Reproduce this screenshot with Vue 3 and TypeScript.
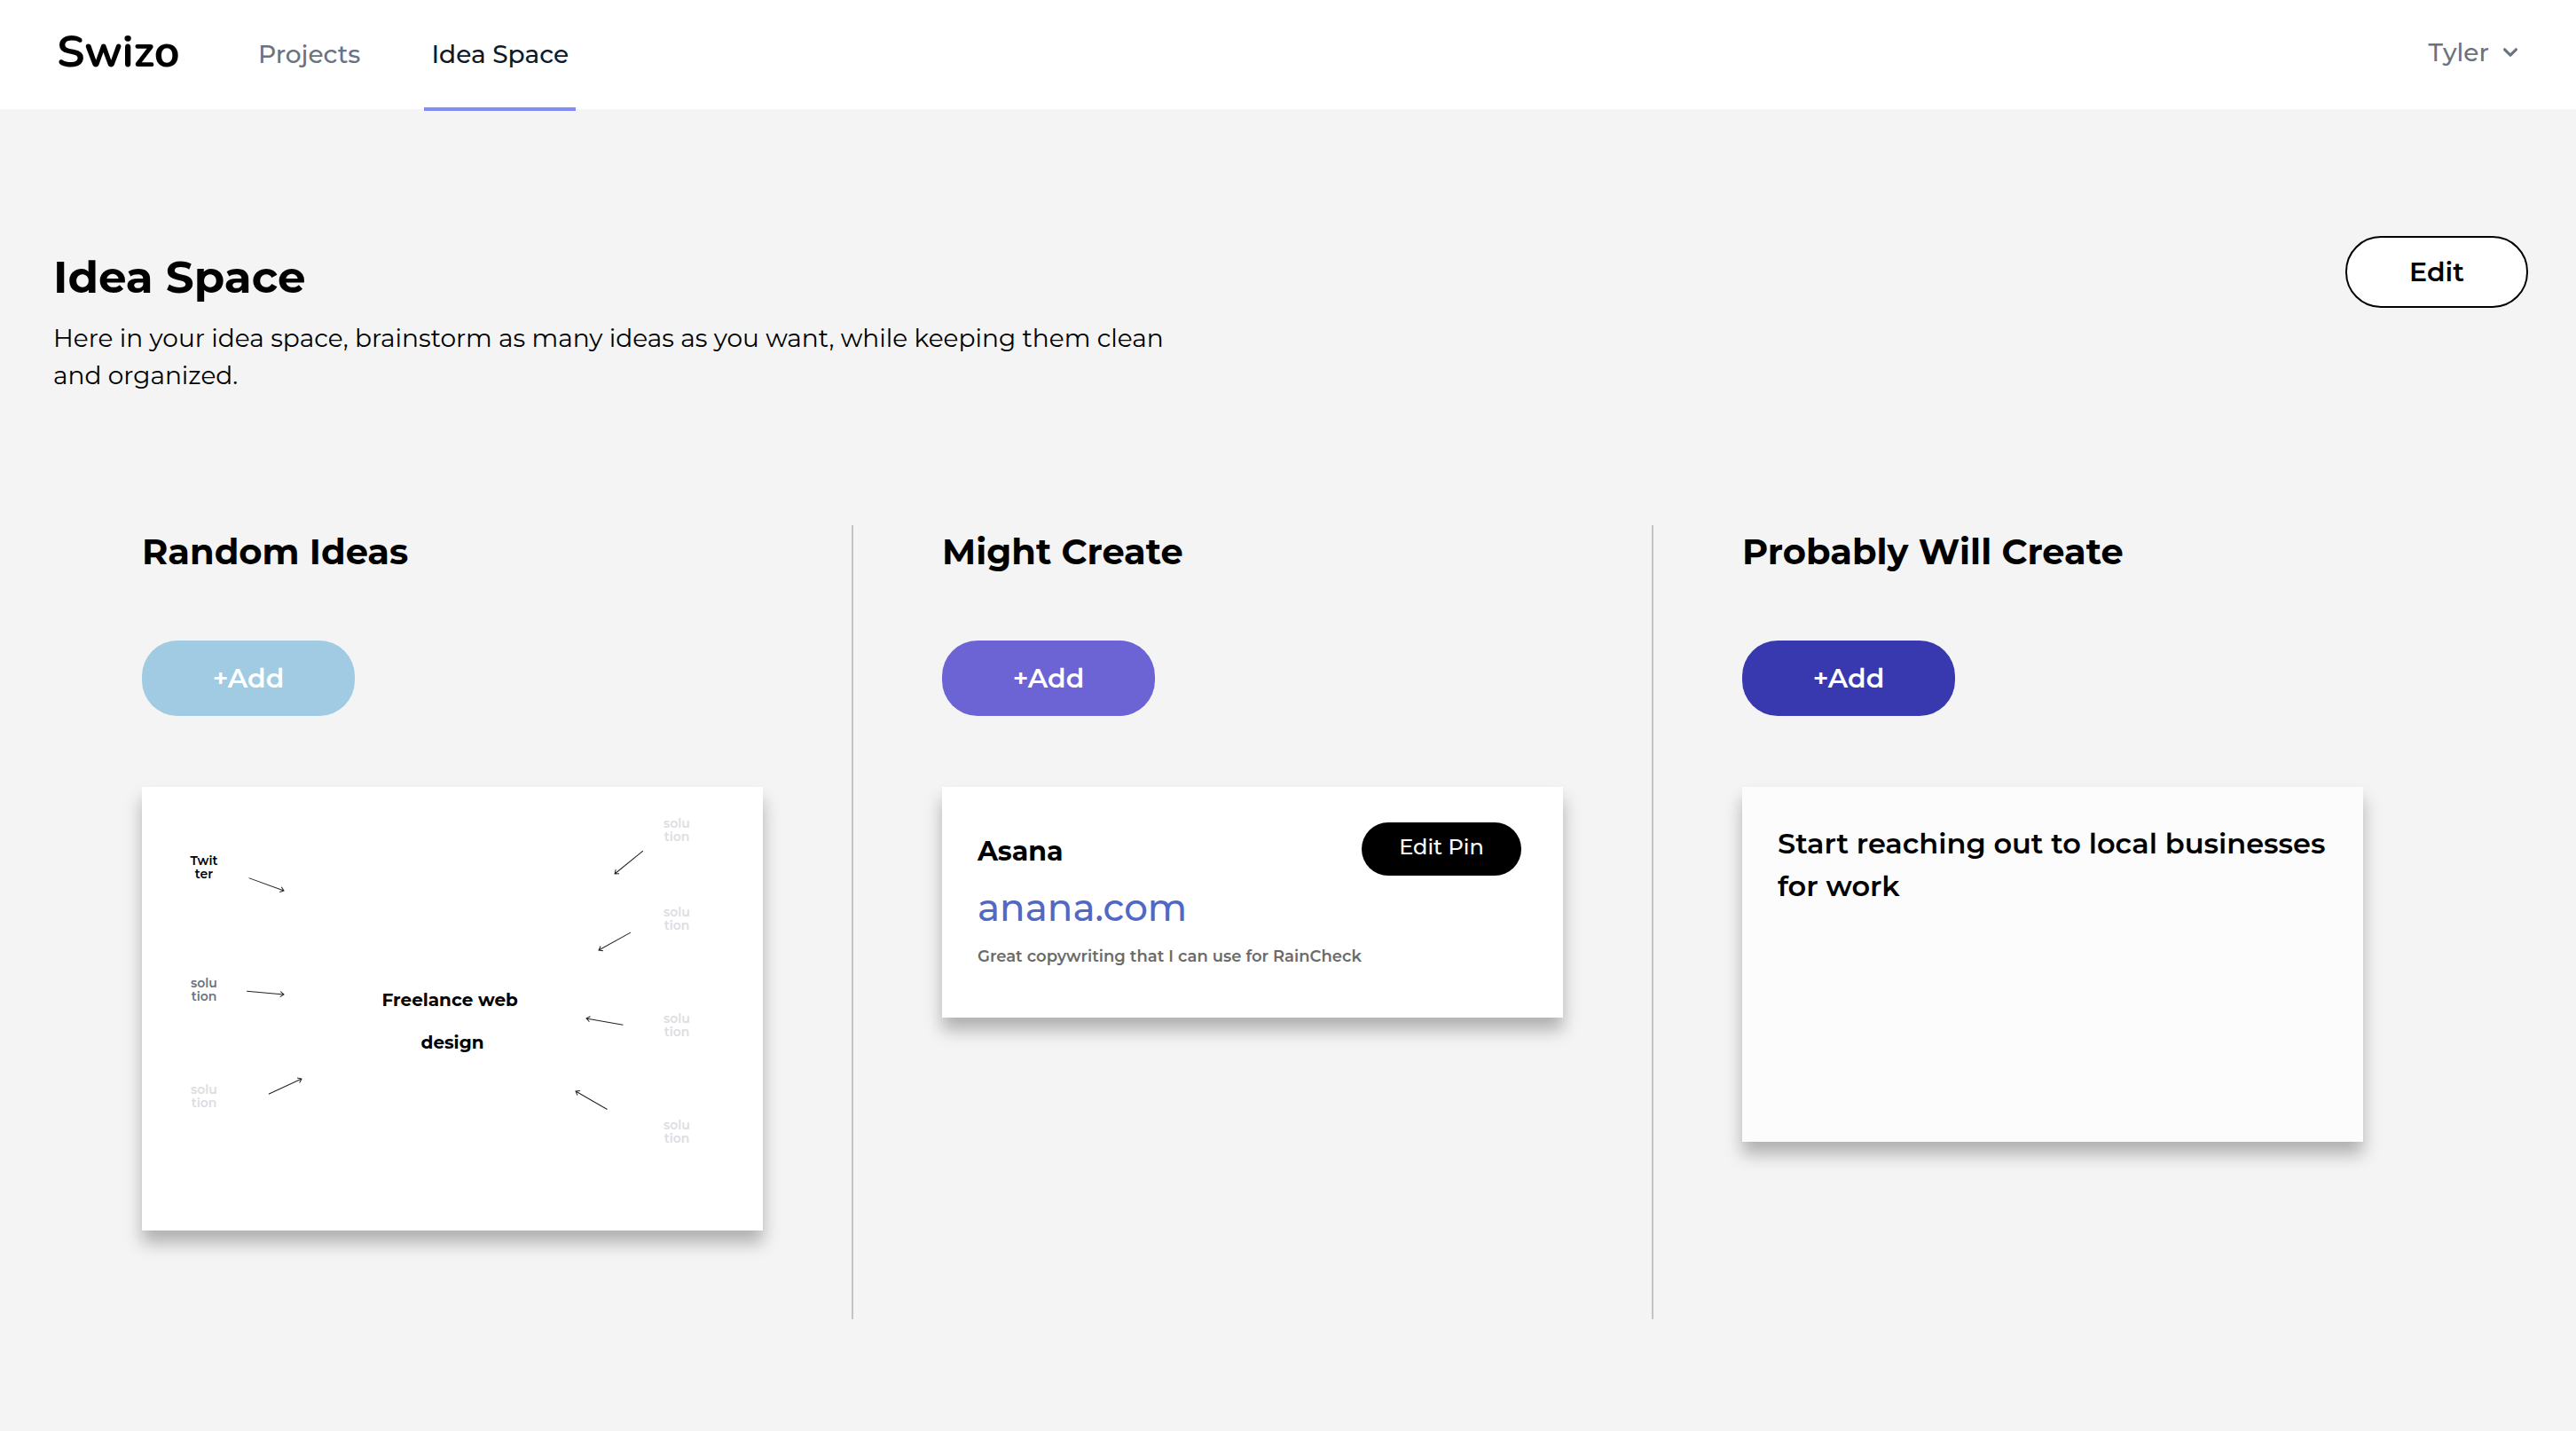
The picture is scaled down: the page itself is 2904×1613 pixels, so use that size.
<script setup lang="ts">
interface MapNode {
  lines: [string, string]
  x: number
  y: number
  tone: 'filled' | 'active' | 'empty'
}

interface Arrow {
  x: number
  y: number
  length: number
  angle: number
}

interface NavItem {
  label: string
  current: boolean
}

const canvas = { width: 700, height: 500 }

const topic = 'Freelance web \ndesign'

const nav: NavItem[] = [
  { label: 'Projects', current: false },
  { label: 'Idea Space', current: true },
]

const nodes: MapNode[] = [
  { lines: ['Twit', 'ter'], x: 70, y: 91, tone: 'filled' },
  { lines: ['solu', 'tion'], x: 70, y: 229, tone: 'active' },
  { lines: ['solu', 'tion'], x: 70, y: 349, tone: 'empty' },
  { lines: ['solu', 'tion'], x: 603, y: 49, tone: 'empty' },
  { lines: ['solu', 'tion'], x: 603, y: 149, tone: 'empty' },
  { lines: ['solu', 'tion'], x: 603, y: 269, tone: 'empty' },
  { lines: ['solu', 'tion'], x: 603, y: 389, tone: 'empty' },
]

/* Each arrow is given by its tip, its length and its heading. */
const arrows: Arrow[] = [
  { x: 160, y: 117, length: 42, angle: 20 },
  { x: 160, y: 234, length: 42, angle: 5 },
  { x: 180, y: 329, length: 41, angle: -25 },
  { x: 533, y: 98, length: 41, angle: 141 },
  { x: 515, y: 184, length: 41, angle: 151 },
  { x: 501, y: 261, length: 42, angle: 190 },
  { x: 489, y: 343, length: 41, angle: 210 },
]

const place = (x: number, y: number) => ({
  left: `${(x / canvas.width) * 100}%`,
  top: `${(y / canvas.height) * 100}%`,
})
</script>

<template>
  <div class="page">
    <header class="topbar">
      <a class="logo" href="#">Swizo</a>
      <nav class="nav">
        <a
          v-for="item in nav"
          :key="item.label"
          href="#"
          class="nav-link"
          :class="{ current: item.current }"
          :aria-current="item.current ? 'page' : undefined"
          >{{ item.label }}</a
        >
      </nav>
      <button type="button" class="account">
        Tyler
        <svg class="chevron" viewBox="0 0 20 20" aria-hidden="true">
          <path
            fill="currentColor"
            fill-rule="evenodd"
            d="M5.293 7.293a1 1 0 011.414 0L10 10.586l3.293-3.293a1 1 0 111.414 1.414l-4 4a1 1 0 01-1.414 0l-4-4a1 1 0 010-1.414z"
          />
        </svg>
      </button>
    </header>

    <main class="content">
      <div class="intro">
        <div>
          <h1>Idea Space</h1>
          <p class="lead">
            Here in your idea space, brainstorm as many ideas as you want, while keeping them clean
            <br />and organized.
          </p>
        </div>
        <button type="button" class="edit">Edit</button>
      </div>

      <div class="board">
        <section class="column">
          <h2>Random Ideas</h2>
          <button type="button" class="add add-light">+Add</button>
          <article class="card map">
            <svg
              class="arrows"
              :viewBox="`0 0 ${canvas.width} ${canvas.height}`"
              preserveAspectRatio="none"
              aria-hidden="true"
            >
              <g
                v-for="(arrow, i) in arrows"
                :key="i"
                :transform="`translate(${arrow.x} ${arrow.y}) rotate(${arrow.angle})`"
              >
                <path :d="`M${-arrow.length} 0H0M-4 -3L0 0L-4 3`" />
              </g>
            </svg>
            <p class="topic">{{ topic }}</p>
            <p
              v-for="(node, i) in nodes"
              :key="i"
              class="node"
              :class="node.tone"
              :style="place(node.x, node.y)"
            >
              {{ node.lines[0] }}<br />{{ node.lines[1] }}
            </p>
          </article>
        </section>

        <section class="column">
          <h2>Might Create</h2>
          <button type="button" class="add add-mid">+Add</button>
          <article class="card pin">
            <div class="pin-text">
              <h3>Asana</h3>
              <a class="pin-link" href="#">anana.com</a>
              <p class="pin-note">Great copywriting that I can use for RainCheck</p>
            </div>
            <button type="button" class="edit-pin">Edit Pin</button>
          </article>
        </section>

        <section class="column">
          <h2>Probably Will Create</h2>
          <button type="button" class="add add-dark">+Add</button>
          <article class="card note">
            <p>Start reaching out to local businesses for work</p>
          </article>
        </section>
      </div>
    </main>
  </div>
</template>

<style>
body {
  margin: 0;
  background: #f4f4f4;
}
</style>

<style scoped>
.page {
  min-height: 100vh;
  background: #f4f4f4;
  color: #000;
  font-family: Montserrat, Inter, "Open Sans", sans-serif;
}

h1,
h2,
h3,
p {
  margin: 0;
}

a {
  text-decoration: none;
}

button {
  padding: 0;
  border: 0;
  font-family: inherit;
  cursor: pointer;
}

.topbar {
  display: flex;
  align-items: stretch;
  height: 123px;
  padding: 0 58px 0 64px;
  background: #fff;
}

.logo {
  display: flex;
  align-items: center;
  width: 219px;
  padding-bottom: 6px;
  box-sizing: border-box;
  color: #000;
  font-family: Nunito, Inter, "Open Sans", sans-serif;
  font-size: 50px;
  font-weight: 700;
}

.nav {
  display: flex;
  gap: 64px;
}

.nav-link {
  display: flex;
  align-items: center;
  height: 121px;
  padding: 0 8px;
  border-bottom: 4px solid transparent;
  color: #6b7280;
  font-size: 28px;
  font-weight: 500;
}

.nav-link.current {
  border-color: #818cf8;
  color: #111827;
}

.account {
  display: flex;
  align-items: center;
  gap: 8px;
  margin-left: auto;
  padding-bottom: 6px;
  background: none;
  color: #6b7280;
  font-size: 28px;
  font-weight: 500;
}

.chevron {
  width: 32px;
  height: 32px;
}

.content {
  padding: 143px 54px 100px 60px;
}

.intro {
  display: flex;
  justify-content: space-between;
  align-items: flex-start;
}

h1 {
  margin-top: 17px;
  font-size: 50px;
  line-height: 60px;
  font-weight: 700;
}

.lead {
  margin-top: 17px;
  font-size: 28px;
  line-height: 42px;
}

.edit {
  width: 206px;
  height: 81px;
  border: 2px solid #000;
  border-radius: 40px;
  background: #fff;
  color: #000;
  font-size: 30px;
  font-weight: 600;
}

.board {
  display: flex;
  margin-top: 148px;
}

.column {
  box-sizing: border-box;
  flex: 0 1 902px;
  min-width: 0;
  padding: 0 100px 100px;
  border-right: 2px solid #c4c4c4;
}

.column:last-child {
  border-right-color: transparent;
}

h2 {
  font-size: 40px;
  line-height: 60px;
  font-weight: 700;
}

.add {
  display: block;
  width: 240px;
  height: 85px;
  margin: 70px 0 80px;
  border-radius: 40px;
  color: #fff;
  font-size: 30px;
  font-weight: 600;
}

.add-light {
  background: #a0cbe3;
}

.add-mid {
  background: #6c63d4;
}

.add-dark {
  background: #3839ae;
}

.card {
  box-sizing: border-box;
  background: #fff;
  box-shadow: 0 14px 18px rgba(0, 0, 0, 0.28);
}

.map {
  position: relative;
  height: 500px;
}

.arrows {
  display: block;
  width: 100%;
  height: 100%;
  fill: none;
  stroke: #222;
  stroke-width: 1;
}

.topic,
.node {
  position: absolute;
  transform: translate(-50%, -50%);
  text-align: center;
  white-space: nowrap;
}

.topic {
  left: 50%;
  top: 264px;
  font-size: 20px;
  line-height: 48px;
  font-weight: 700;
  white-space: pre;
}

.node {
  font-size: 14px;
  line-height: 15px;
  font-weight: 600;
}

.node.active {
  color: #6b7280;
}

.node.empty {
  color: #dddde1;
}

.pin {
  display: flex;
  justify-content: space-between;
  align-items: flex-start;
  height: 260px;
  padding: 40px 47px 40px 40px;
}

.pin-text {
  flex: 0 1 auto;
  min-width: 0;
}

h3 {
  margin-top: 10px;
  font-size: 30px;
  line-height: 45px;
  font-weight: 700;
}

.pin-link {
  display: block;
  margin-top: 10px;
  color: #5168c4;
  font-size: 42px;
  line-height: 63px;
  font-weight: 500;
}

.pin-note {
  color: #6b6b6b;
  font-size: 18px;
  line-height: 46px;
  font-weight: 600;
  white-space: nowrap;
}

.edit-pin {
  flex: none;
  width: 180px;
  height: 60px;
  margin-left: -40px;
  padding-bottom: 6px;
  border-radius: 30px;
  background: #000;
  color: #fff;
  font-size: 24px;
  font-weight: 500;
}

.note {
  min-height: 400px;
  padding: 40px;
  background: #fcfcfc;
  font-size: 32px;
  line-height: 48px;
  font-weight: 600;
}
</style>
